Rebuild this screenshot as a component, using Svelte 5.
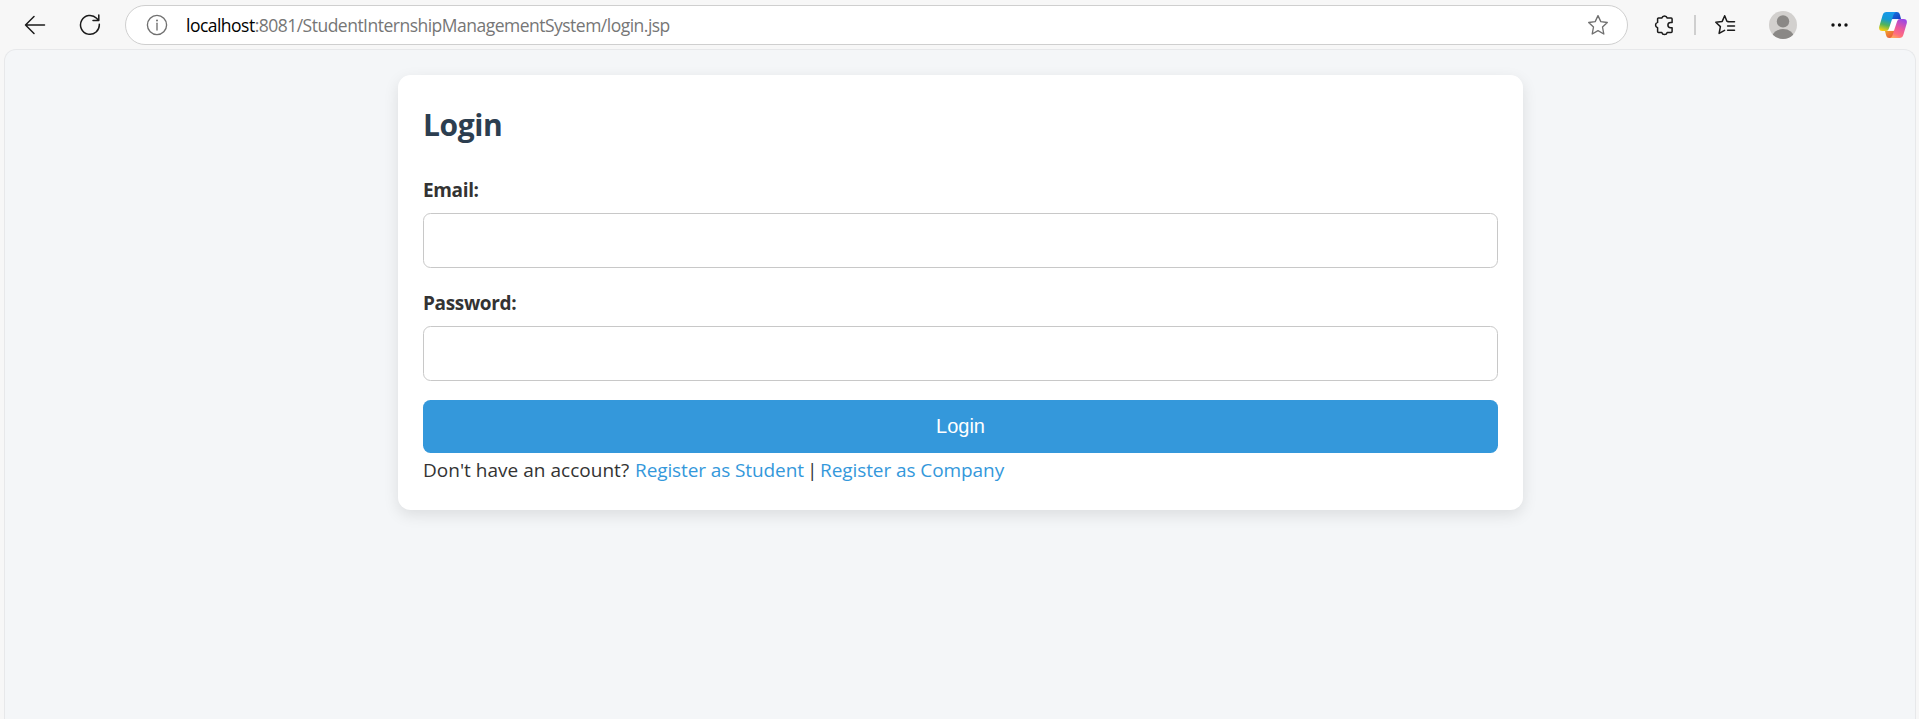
<script>
  let email = $state('');
  let password = $state('');
</script>

<div class="browser">
  <header class="toolbar">
    <button class="tool back" aria-label="Back">
      <svg width="22" height="20" viewBox="0 0 22 20"><path d="M20.500 10H1.500M10 1.500 1.500 10l8.500 8.500" /></svg>
    </button>
    <button class="tool reload" aria-label="Refresh">
      <svg width="22" height="22" viewBox="0 0 22 22"><path d="M20.3 10.2A9.4 9.4 0 1 1 17.6 4.3L19.7 6.5M19.8 1V6.6H14" /></svg>
    </button>
    <div class="address">
      <svg class="info" width="22" height="22" viewBox="0 0 22 22"><circle cx="11" cy="11" r="9.6" /><path d="M11 9.2V16" /><circle class="dot" cx="11" cy="6.4" r="1" /></svg>
      <div class="url"><span class="host">localhost</span><span class="path">:8081/StudentInternshipManagementSystem/login.jsp</span></div>
      <svg class="star" width="22" height="22" viewBox="0 0 22 22"><path d="m11 1.6 2.8 6 6.5.9-4.8 4.5 1.3 7L11 16.7 5.2 20l1.3-7L1.7 8.5l6.5-.9z" /></svg>
    </div>
    <button class="tool puzzle" aria-label="Extensions">
      <svg width="20" height="22" viewBox="0 0 20 22"><path d="M4.500 4H7.800a2.800 2.800 0 0 1 5.400 0H17.200a.9.900 0 0 1 .9.900V8.400H16.600a2.700 2.700 0 0 0 0 5.400H18.100V17.600a.9.900 0 0 1-.9.900H13.200a2.800 2.800 0 0 1-5.400 0H4.500a.9.900 0 0 1-.9-.9V13.800a2.800 2.800 0 0 1 0-5.400V4.900A.9.900 0 0 1 4.500 4z" /></svg>
    </button>
    <span class="divider"></span>
    <button class="tool favorites" aria-label="Favorites">
      <svg width="22" height="22" viewBox="0 0 22 22"><path d="M14.2 7.5 12.9 7.300 10.700 1.800 8.200 7.400 1.800 8.200l4.600 4.400-1.300 6.800 5.500-3M13.600 7.800H20.500M13.6 12H20.500M13.6 16.2H20.500" /></svg>
    </button>
    <button class="tool profile" aria-label="Profile">
      <svg width="28" height="28" viewBox="0 0 28 28"><defs><clipPath id="face"><circle cx="14" cy="14" r="14" /></clipPath></defs><g clip-path="url(#face)"><path class="plate" d="M0 0h28v28H0z" /><circle class="person" cx="14" cy="10.4" r="6.2" /><ellipse class="person" cx="14" cy="26.5" rx="11" ry="8.4" /></g></svg>
    </button>
    <button class="tool more" aria-label="Settings and more">
      <svg width="18" height="4" viewBox="0 0 18 4"><circle cx="2" cy="2" r="1.7" /><circle cx="8.5" cy="2" r="1.7" /><circle cx="15" cy="2" r="1.7" /></svg>
    </button>
    <button class="tool copilot" aria-label="Copilot">
      <svg width="28" height="26" viewBox="0 0 28 26">
        <defs>
          <linearGradient id="cool" x1=".6" y1="0" x2=".35" y2="1"><stop offset="0" stop-color="#1798ed" /><stop offset=".4" stop-color="#159bd3" /><stop offset=".7" stop-color="#52b45a" /><stop offset="1" stop-color="#f2cf13" /></linearGradient>
          <linearGradient id="warm" x1=".7" y1="0" x2=".3" y2="1"><stop offset="0" stop-color="#9b48e5" /><stop offset=".45" stop-color="#e958a0" /><stop offset=".8" stop-color="#ff707d" /><stop offset="1" stop-color="#ffa65b" /></linearGradient>
          <linearGradient id="navy" x1="0" y1="0" x2="1" y2="1"><stop offset="0" stop-color="#1578df" /><stop offset="1" stop-color="#163bc0" /></linearGradient>
          <linearGradient id="ember" x1="0" y1="0" x2="1" y2="1"><stop offset="0" stop-color="#f2a62b" /><stop offset="1" stop-color="#e74642" /></linearGradient>
        </defs>
        <path fill="url(#navy)" d="M12 0h5.700c2 0 2.800 1.200 3.300 3l1.100 4.200H13z" />
        <path fill="url(#ember)" d="M16 26h-5.700C8.300 26 7.500 24.800 7 23l-1.100-4.200H15z" />
        <path fill="#fff" d="M13.500 7.200H19.500L14.500 18.800H8.500z" />
        <path fill="url(#cool)" d="M7.500 0h10.200c-1.700.3-2.700 1.300-3.300 3.100L10.200 15.800c-.7 2.200-1.700 3.200-3.700 3.200H3.300C.6 19-.4 17 .3 14.500L3.600 3.300C4.300 1 5.500 0 7.500 0z" />
        <path fill="url(#warm)" d="M20.500 26H10.300c1.700-.3 2.700-1.300 3.300-3.100L17.800 10.200c.7-2.200 1.700-3.200 3.700-3.200h3.200c2.700 0 3.700 2 3 4.500l-3.300 11.200c-.7 2.300-1.900 3.300-3.900 3.300z" />
      </svg>
    </button>
  </header>

  <main class="page">
    <section class="card">
      <h2>Login</h2>
      <form onsubmit={(event) => event.preventDefault()}>
        <label for="email">Email:</label>
        <input id="email" type="email" bind:value={email} />
        <label for="password">Password:</label>
        <input id="password" type="password" bind:value={password} />
        <button class="submit" type="submit">Login</button>
      </form>
      <p><span class="ask">Don't have an account?</span><a class="student" href="#student">Register as Student</a><span class="bar">|</span><a class="company" href="#company">Register as Company</a></p>
    </section>
  </main>
</div>

<style>
  :global(body) { margin: 0; background: #f7f7f7; overflow: hidden; }
  .browser { display: flex; flex-direction: column; height: 719px; font-family: "Open Sans", "Noto Sans", sans-serif; }
  .toolbar { display: flex; align-items: center; flex: none; height: 49px; box-sizing: border-box; padding-left: 24px; }
  button { font: inherit; border: 0; padding: 0; margin: 0; background: none; }
  svg { display: block; fill: none; stroke: #1b1b1b; stroke-width: 1.5; stroke-linecap: round; stroke-linejoin: round; flex: none; }
  .tool { flex: none; }
  .reload { margin-left: 33px; }
  .address { display: flex; align-items: center; box-sizing: border-box; width: 1503px; height: 40px; margin-left: 24px; padding: 0 18px 0 20px; border: 1px solid #cfcfcf; border-radius: 20px; background: #fff; flex: none; }
  .info, .star { stroke: #707070; stroke-width: 1.35; }
  .info .dot { fill: #707070; stroke: none; }
  .url { flex: 1; margin-left: 18px; font-size: 17.500px; line-height: 24px; white-space: nowrap; }
  .host { color: #000; letter-spacing: -.52px; }
  .path { color: #767676; letter-spacing: -.51px; }
  .puzzle { margin-left: 26px; }
  .divider { width: 2px; height: 20px; margin-left: 20px; background: #cfcfcf; }
  .favorites { margin-left: 18px; }
  .profile { margin-left: 33px; }
  .profile svg, .more svg, .copilot svg { stroke: none; }
  .plate { fill: #d2d0ce; }
  .person { fill: #8a8886; }
  .more { margin-left: 34px; }
  .more svg { fill: #111; }
  .copilot { margin-left: 30px; }
  .page { flex: 1; margin: 0 3px 0 4px; border: 1px solid #e7e8ea; border-bottom: 0; border-radius: 12px 12px 0 0; background: #f4f6f8; box-sizing: border-box; padding-top: 25px; }
  .card { box-sizing: border-box; width: 1125px; height: 435px; margin: 0 auto 0 393px; padding: 25px; border-radius: 12.5px; background: #fff; box-shadow: 0 5px 15px rgba(0, 0, 0, .1); color: #333; }
  h2 { margin: 0; height: 73px; line-height: 49px; font-size: 30px; font-weight: 700; color: #2c3e50; letter-spacing: -.4px; }
  form { display: flex; flex-direction: column; }
  label { font-size: 19px; font-weight: 700; line-height: 34px; height: 40px; letter-spacing: -.35px; }
  input { box-sizing: border-box; height: 55px; margin: 0 0 18px; padding: 0 12px; border: 1px solid #c8c8c8; border-radius: 7.5px; background: #fff; outline: 0; font: inherit; }
  .submit { height: 53px; margin-top: 1px; border-radius: 7.5px; background: #3498db; color: #fff; font-family: "Liberation Sans", Arial, sans-serif; font-size: 20px; }
  p { display: flex; margin: 0; font-size: 19px; line-height: 34px; white-space: nowrap; }
  .ask { width: 212px; letter-spacing: .02px; }
  .student { width: 172px; letter-spacing: -.1px; }
  .bar { width: 13px; }
  a { color: #3498db; text-decoration: none; letter-spacing: -.08px; }
</style>
